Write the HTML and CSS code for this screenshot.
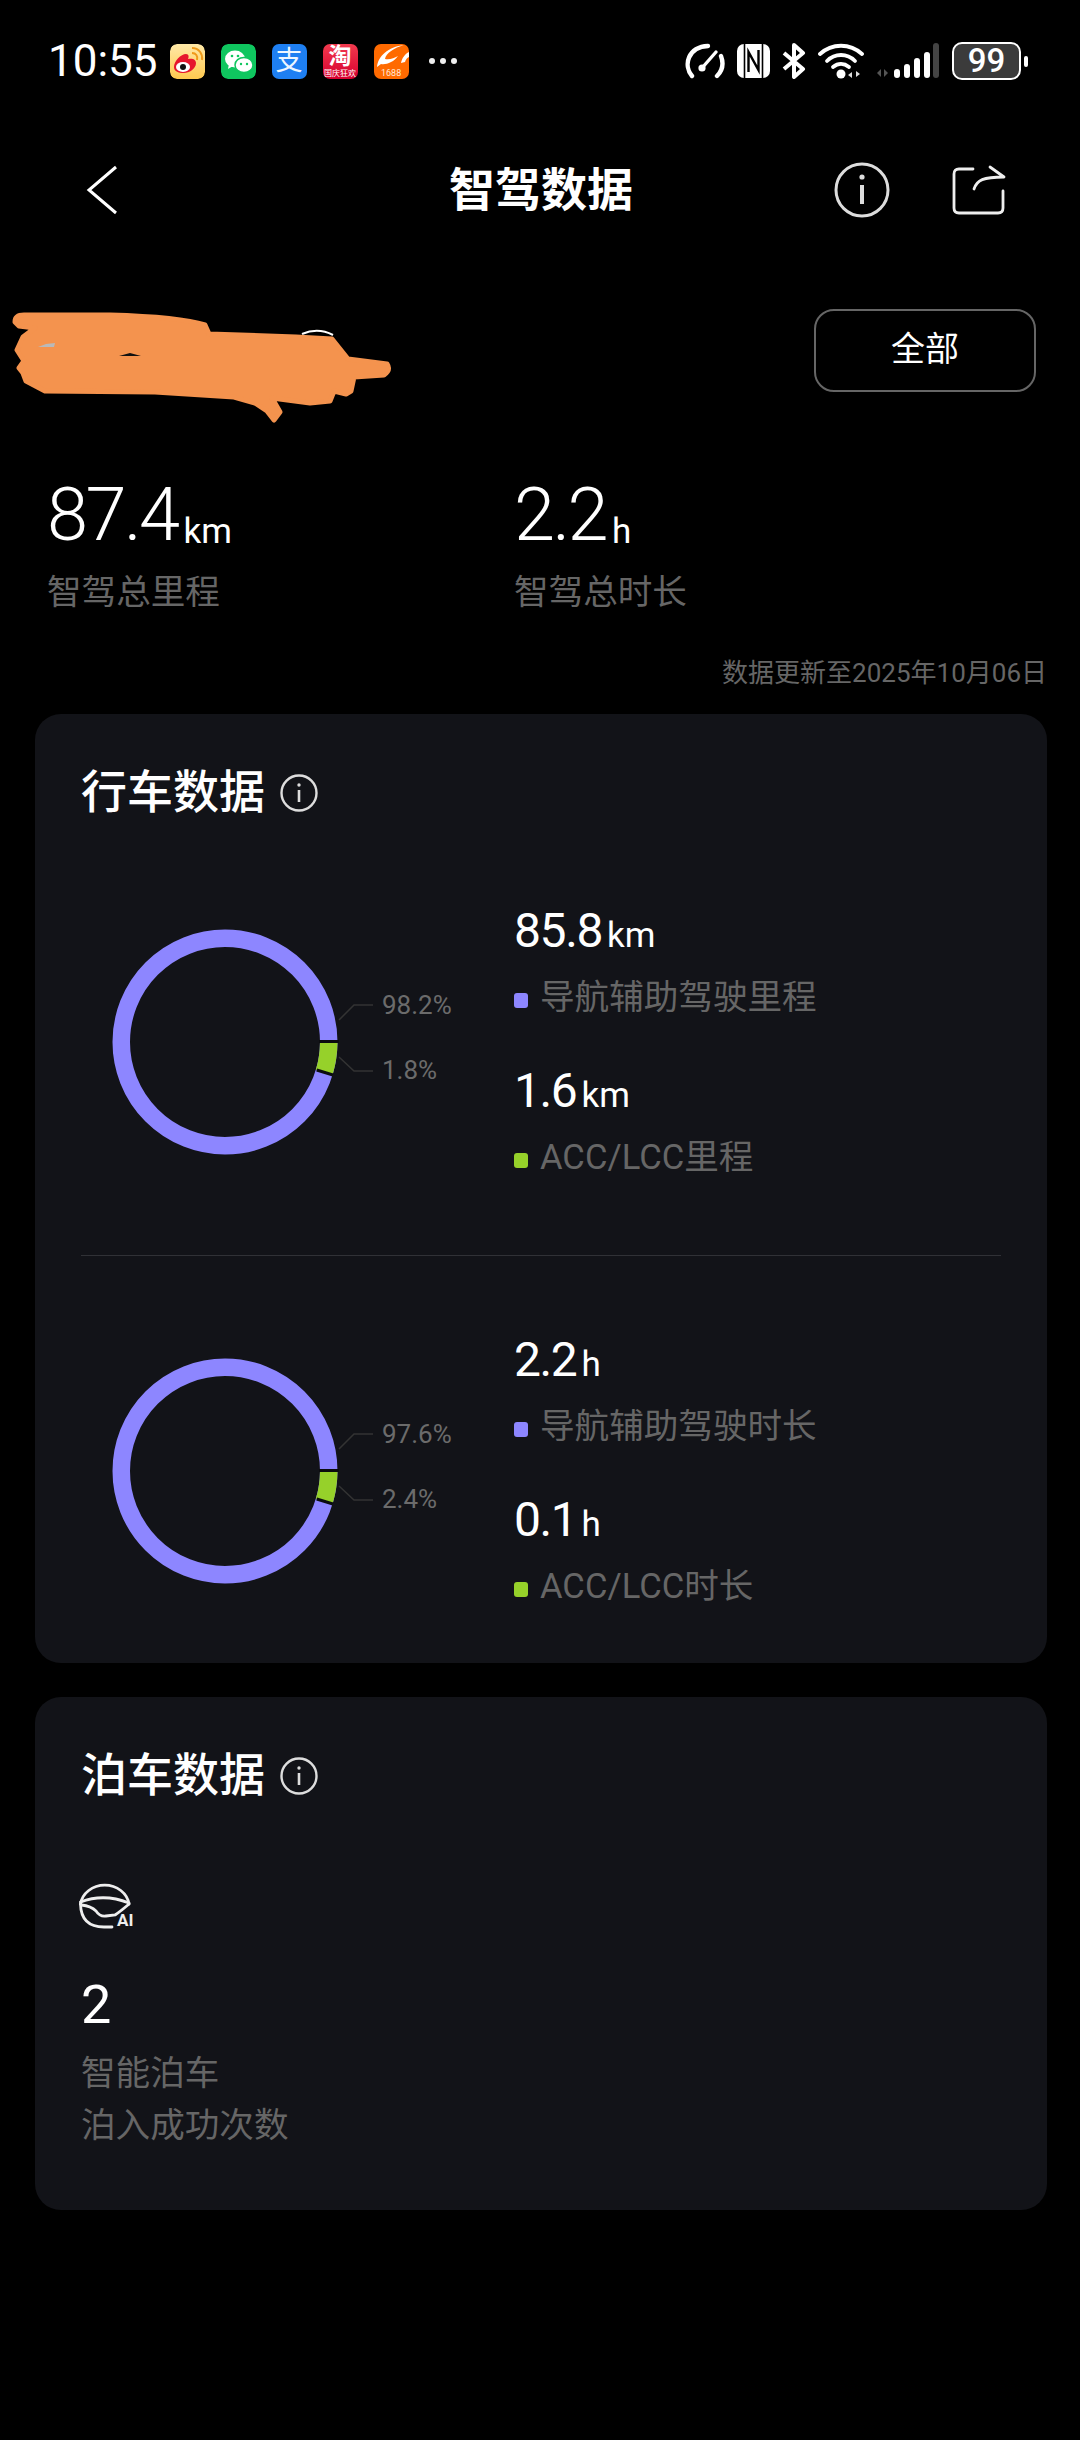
FILE: index.html
```html
<!DOCTYPE html>
<html lang="zh">
<head>
    <meta charset="utf-8">
    <meta name="viewport" content="width=device-width, initial-scale=1">
    <title>智驾数据</title>
    <link rel="stylesheet" href="styles.css">
</head>
<body>
    <div class="status-bar">
        <span class="clock">10:55</span>
        <div class="app-icons">
            <svg class="app" viewBox="0 0 35 35">
                <defs><linearGradient id="wb" x1="0" y1="0" x2="0" y2="1"><stop offset="0" stop-color="#ffe9a8"/><stop offset="1" stop-color="#ffc94f"/></linearGradient></defs>
                <rect width="35" height="35" rx="7" fill="url(#wb)"/>
                <path d="M4 23c0-6 7-13 12-13 3 0 3 3 2 5 4-1 8 0 8 4 0 6-7 10-12 10-6 0-10-2-10-6z" fill="#e6162d"/>
                <ellipse cx="13" cy="23" rx="7" ry="5" fill="#fff"/>
                <circle cx="13" cy="23" r="3" fill="#111"/>
                <path d="M22 9c4 0 6 3 5 7M22 4c7 0 11 6 10 12" fill="none" stroke="#f09a1a" stroke-width="2"/>
            </svg>
            <svg class="app" viewBox="0 0 35 35">
                <rect width="35" height="35" rx="7" fill="#0fc65f"/>
                <ellipse cx="14" cy="15" rx="10" ry="8.5" fill="#fff"/>
                <path d="M8 20l-1 5 5-3z" fill="#fff"/>
                <ellipse cx="23" cy="21" rx="9" ry="7.5" fill="#fff" stroke="#0fc65f" stroke-width="1.5"/>
                <circle cx="11" cy="12" r="1.3" fill="#0fc65f"/><circle cx="17" cy="12" r="1.3" fill="#0fc65f"/>
                <circle cx="20" cy="20" r="1.2" fill="#0fc65f"/><circle cx="26" cy="20" r="1.2" fill="#0fc65f"/>
            </svg>
            <div class="app alipay">支</div>
            <div class="app taobao"><span class="tb-main">淘</span><span class="tb-sub">国庆狂欢</span></div>
            <div class="app ali1688">
                <svg class="swirl" viewBox="0 0 35 24"><path d="M3 23C4 12 14 3 30 1 20 4 12 9 11 15c5 1 9-1 13-3-4 6-12 9-17 8zM27 19c1-5 4-9 8-11v5c-2 1-3 2-4 5z" fill="#fff"/></svg>
                <span class="ali-num">1688</span>
            </div>
            <div class="more"><i></i><i></i><i></i></div>
        </div>
        <div class="sys-icons">
            <svg class="ic-speed" viewBox="0 0 41 36" fill="none" stroke="#fff" stroke-width="4.4" stroke-linecap="round">
                <path d="M8 33C-1 22 4 4 24 3"/><path d="M37 13c3 8 1 15-4 20"/>
                <path d="M18 25L32 9" stroke-width="3.4"/><circle cx="18" cy="25" r="3.6" fill="#fff" stroke="none"/>
            </svg>
            <svg class="ic-nfc" viewBox="0 0 33 34">
                <rect width="33" height="34" rx="7" fill="#fff"/>
                <path d="M7.5 0V34M25.5 0V34" stroke="#000" stroke-width="1.6"/>
                <path d="M11.5 28V8L21.5 26V6" fill="none" stroke="#000" stroke-width="2.4"/>
            </svg>
            <svg class="ic-bt" viewBox="0 0 24 36" fill="none" stroke="#fff" stroke-width="4" stroke-linejoin="round">
                <path d="M2 10L21 26L12 34V2L21 10L2 26"/>
            </svg>
            <svg class="ic-wifi" viewBox="0 0 46 36" fill="none" stroke="#fff" stroke-width="3.8" stroke-linecap="round">
                <path d="M2 11C14 0 32 0 44 11"/><path d="M9 18C17 10 29 10 37 18"/><path d="M15 24C20 20 26 20 31 24"/>
                <circle cx="23" cy="31" r="4.5" fill="#fff" stroke="none"/>
                <path d="M34 29l-4 3 4 3zM38 28l4 3-4 3z" fill="#ddd" stroke="none"/>
            </svg>
            <svg class="ic-signal" viewBox="0 0 64 36">
                <path d="M5 26l-4 4 4 4zM8 26l4 4-4 4z" fill="#555"/>
                <rect x="18" y="26" width="6" height="9" rx="3" fill="#fff"/>
                <rect x="28" y="21" width="6" height="14" rx="3" fill="#fff"/>
                <rect x="38" y="15" width="6" height="20" rx="3" fill="#fff"/>
                <rect x="48" y="9" width="6" height="26" rx="3" fill="#fff"/>
                <rect x="57" y="0" width="6" height="35" rx="3" fill="#444"/>
            </svg>
            <div class="battery"><span class="battery-body">99</span><i class="battery-nub"></i></div>
        </div>
    </div>

    <div class="nav-bar">
        <svg class="ic-back" viewBox="0 0 32 50" fill="none" stroke="#fff" stroke-width="3">
            <path d="M30 2L3 25L30 48"/>
        </svg>
        <h1 class="nav-title">智驾数据</h1>
        <svg class="ic-info-lg" viewBox="0 0 56 56" fill="none" stroke="#ddd" stroke-width="3">
            <circle cx="28" cy="28" r="26"/>
            <path d="M28 23V42" stroke-width="4"/>
            <circle cx="28" cy="15" r="2.6" fill="#ddd" stroke="none"/>
        </svg>
        <svg class="ic-share" viewBox="0 0 54 50" fill="none" stroke="#eee" stroke-width="2.8" stroke-linecap="round" stroke-linejoin="round">
            <path d="M21 4H7Q2 4 2 9V43Q2 48 7 48H46Q51 48 51 43V26"/>
            <path d="M22 24C25 15 31 12 52 12L38 2"/>
        </svg>
    </div>

    <div class="filter-row">
        <svg class="scribble" viewBox="0 0 400 120">
            <path d="M302 31Q318 24 333 32" fill="none" stroke="#fff" stroke-width="2"/>
            <path d="M15 19Q15 12 24 12L110 12Q180 14 205 22L209 31L296 34L332 36L348 56L387 61Q391 67 384 72L354 74L351 88L346 91L334 88L330 98L310 100L272 95L280 109L274 117L267 108L255 100L234 94L155 89L45 88L26 78L23 70L19 65L24 58L17 47L23 34L35 25L19 23Z" fill="#f4934e" stroke="#f4934e" stroke-width="5" stroke-linejoin="round"/>
            <path d="M38 44L46 41L55 40L54 44Z" fill="#b9b9b9"/>
            <path d="M119 53L130 50L141 53Z" fill="#111"/>
        </svg>
        <div class="filter-btn">全部</div>
    </div>

    <div class="summary">
        <div class="summary-item">
            <div class="big-value">87.4<span class="big-unit">km</span></div>
            <div class="muted">智驾总里程</div>
        </div>
        <div class="summary-item">
            <div class="big-value">2.2<span class="big-unit">h</span></div>
            <div class="muted">智驾总时长</div>
        </div>
    </div>

    <div class="updated">数据更新至2025年10月06日</div>

    <div class="card">
        <div class="card-title">行车数据
            <svg class="ic-info" viewBox="0 0 38 38" fill="none" stroke="#ddd" stroke-width="2.4">
                <circle cx="19" cy="19" r="17.5"/>
                <path d="M19 16V28" stroke-width="2.6"/>
                <circle cx="19" cy="11" r="1.7" fill="#ddd" stroke="none"/>
            </svg>
        </div>

        <div class="chart-row first">
            <svg class="donut" viewBox="0 0 433 260">
                <circle cx="144" cy="131" r="103.75" fill="none" stroke="#8d86ff" stroke-width="17.5"/>
                <path d="M247.75 131A103.75 103.75 0 0 1 243.2 161.3" fill="none" stroke="#96d12a" stroke-width="17.5"/>
                <path d="M238 130.5H258M235.7 159L252 164" stroke="#0b0c0f" stroke-width="3"/>
                <path d="M258 109L273 94H292M258 146L273 160H292" fill="none" stroke="#333" stroke-width="1.5"/>
                <text x="301" y="103" class="pct">98.2%</text>
                <text x="301" y="168" class="pct">1.8%</text>
            </svg>
            <div class="stats">
                <div class="stat-value">85.8<span class="stat-unit">km</span></div>
                <div class="stat-label"><i class="dot purple"></i>导航辅助驾驶里程</div>
                <div class="stat-value second">1.6<span class="stat-unit">km</span></div>
                <div class="stat-label"><i class="dot green"></i>ACC/LCC里程</div>
            </div>
        </div>

        <div class="divider"></div>

        <div class="chart-row">
            <svg class="donut" viewBox="0 0 433 260">
                <circle cx="144" cy="131" r="103.75" fill="none" stroke="#8d86ff" stroke-width="17.5"/>
                <path d="M247.75 131A103.75 103.75 0 0 1 243.2 161.3" fill="none" stroke="#96d12a" stroke-width="17.5"/>
                <path d="M238 130.5H258M235.7 159L252 164" stroke="#0b0c0f" stroke-width="3"/>
                <path d="M258 109L273 94H292M258 146L273 160H292" fill="none" stroke="#333" stroke-width="1.5"/>
                <text x="301" y="103" class="pct">97.6%</text>
                <text x="301" y="168" class="pct">2.4%</text>
            </svg>
            <div class="stats">
                <div class="stat-value">2.2<span class="stat-unit">h</span></div>
                <div class="stat-label"><i class="dot purple"></i>导航辅助驾驶时长</div>
                <div class="stat-value second">0.1<span class="stat-unit">h</span></div>
                <div class="stat-label"><i class="dot green"></i>ACC/LCC时长</div>
            </div>
        </div>
    </div>

    <div class="card parking">
        <div class="card-title">泊车数据
            <svg class="ic-info" viewBox="0 0 38 38" fill="none" stroke="#ddd" stroke-width="2.4">
                <circle cx="19" cy="19" r="17.5"/>
                <path d="M19 16V28" stroke-width="2.6"/>
                <circle cx="19" cy="11" r="1.7" fill="#ddd" stroke="none"/>
            </svg>
        </div>
        <div class="park-icon">
            <svg class="ic-park" viewBox="0 0 58 48" fill="none" stroke="#eee" stroke-width="2.8" stroke-linecap="round">
                <path d="M1.5 23A24.5 22 0 0 1 50 23"/>
                <path d="M1.5 21Q25 12 50 22"/>
                <path d="M2.5 24Q12 25 17 30Q21 36 27 35L36 34Q42 30 50 23"/>
                <path d="M1.5 23Q2 46 25 46L33 46"/>
            </svg>
            <span class="ai-badge">AI</span>
        </div>
        <div class="park-value">2</div>
        <div class="park-label">智能泊车</div>
        <div class="park-label">泊入成功次数</div>
    </div>
</body>
</html>
```

FILE: styles.css
```css
body {
    margin: 0;
    width: 1080px;
    height: 2440px;
    background-color: #000;
    color: white;
    font-family: Roboto, "Noto Sans CJK SC", sans-serif;
    overflow: hidden;
}

i {
    display: block;
}

/* status bar */
.status-bar {
    height: 122px;
    padding: 0 52px 0 48px;
    display: flex;
    align-items: center;
    justify-content: space-between;
}

.clock {
    font-size: 44px;
    line-height: 44px;
}

.app-icons {
    display: flex;
    align-items: center;
    gap: 16px;
    margin-right: auto;
    margin-left: 12px;
}

.app {
    width: 35px;
    height: 35px;
    border-radius: 7px;
    overflow: hidden;
    display: block;
}

.alipay {
    background-color: #1e7ff2;
    font-size: 27px;
    line-height: 35px;
    text-align: center;
    color: #eef6ff;
}

.taobao {
    background: linear-gradient(#f23a4e, #d6002f);
    text-align: center;
}

.tb-main {
    display: block;
    font-size: 23px;
    line-height: 25px;
    font-weight: bold;
}

.tb-sub {
    display: block;
    font-size: 8px;
    line-height: 9px;
    white-space: nowrap;
}

.ali1688 {
    background-color: #ff6a00;
    text-align: center;
}

.swirl {
    display: block;
    width: 35px;
    height: 24px;
}

.ali-num {
    display: block;
    font-size: 9px;
    line-height: 10px;
    color: #ffe9d6;
}

.more {
    display: flex;
    gap: 5px;
    margin-left: 4px;
}

.more i {
    width: 6px;
    height: 6px;
    border-radius: 50%;
    background-color: #eee;
}

.sys-icons {
    display: flex;
    align-items: center;
    gap: 12px;
}

.ic-speed { width: 41px; height: 36px; }
.ic-nfc { width: 33px; height: 34px; }
.ic-bt { width: 24px; height: 36px; }
.ic-wifi { width: 46px; height: 36px; }
.ic-signal { width: 64px; height: 36px; }

.battery {
    display: flex;
    align-items: center;
    gap: 3px;
}

.battery-body {
    width: 65px;
    height: 34px;
    border: 2.5px solid #fff;
    border-radius: 10px;
    background-color: #3b3b3b;
    font-size: 33px;
    font-weight: 500;
    line-height: 34px;
    text-align: center;
}

.battery-nub {
    width: 4px;
    height: 11px;
    border-radius: 2px;
    background-color: #fff;
}

/* title bar */
.nav-bar {
    height: 136px;
    padding: 0 74px 0 86px;
    display: flex;
    align-items: center;
}

.ic-back {
    width: 32px;
    height: 50px;
}

.nav-title {
    margin: 0 0 0 331px;
    font-size: 46px;
    line-height: 60px;
    font-weight: 700;
}

.ic-info-lg {
    width: 56px;
    height: 56px;
    margin-left: auto;
}

.ic-share {
    width: 54px;
    height: 50px;
    margin-left: 62px;
}

/* filter */
.filter-row {
    position: relative;
    height: 83px;
    margin-top: 51px;
    padding-right: 44px;
    display: flex;
    justify-content: flex-end;
}

.scribble {
    position: absolute;
    left: 0;
    top: -6px;
    width: 400px;
    height: 120px;
}

.filter-btn {
    width: 218px;
    height: 79px;
    border: 2px solid #666;
    border-radius: 20px;
    font-size: 34px;
    line-height: 76px;
    text-align: center;
}

/* totals */
.summary {
    margin-top: 83px;
    padding-left: 47px;
    display: flex;
}

.summary-item {
    width: 467px;
}

.big-value {
    font-size: 74px;
    font-weight: 300;
    line-height: 80px;
    letter-spacing: -2.6px;
    white-space: nowrap;
}

.big-unit {
    margin-left: 6px;
    font-size: 35px;
    font-weight: 400;
    line-height: 1;
    letter-spacing: 0;
    vertical-align: -3px;
}

.muted {
    margin-top: 15px;
    font-size: 34.6px;
    line-height: 44px;
    color: #666;
}

.updated {
    margin-top: 41px;
    padding-right: 33px;
    font-size: 26px;
    line-height: 36px;
    text-align: right;
    color: #666;
}

/* cards */
.card {
    margin: 23px 33px 0 35px;
    padding: 48px 46px 55px;
    background-color: #121318;
    border-radius: 26px;
}

.parking {
    margin-top: 34px;
    padding-bottom: 59px;
}

.card-title {
    display: flex;
    align-items: center;
    gap: 15px;
    font-size: 46px;
    line-height: 60px;
    font-weight: 500;
}

.ic-info {
    width: 38px;
    height: 38px;
    margin-top: 2px;
}

.chart-row {
    display: flex;
    align-items: center;
}

.chart-row.first {
    margin-top: 81px;
}

.donut {
    width: 433px;
    height: 260px;
    flex-shrink: 0;
}

.pct {
    font-size: 26px;
    fill: #6b6b6b;
}

.stat-value {
    font-size: 48px;
    line-height: 56px;
    letter-spacing: -1.4px;
    white-space: nowrap;
}

.stat-value.second {
    margin-top: 44px;
}

.stat-unit {
    margin-left: 5px;
    font-size: 35px;
    line-height: 1;
    letter-spacing: 0;
}

.stat-label {
    margin-top: 16px;
    display: flex;
    align-items: center;
    gap: 12px;
    font-size: 34.6px;
    line-height: 44px;
    color: #666;
}

.dot {
    width: 14px;
    height: 15px;
    border-radius: 3px;
    margin-top: 6px;
}

.dot.purple { background-color: #8d86ff; }
.dot.green { background-color: #96d12a; }

.divider {
    height: 1px;
    margin: 76px 0;
    background-color: #303136;
}

/* parking */
.park-icon {
    position: relative;
    width: 58px;
    height: 48px;
    margin-top: 76px;
    margin-left: -2px;
}

.ic-park {
    display: block;
    width: 58px;
    height: 48px;
}

.ai-badge {
    position: absolute;
    left: 38px;
    bottom: 0;
    font-size: 17px;
    font-weight: 700;
    line-height: 17px;
    color: #eee;
}

.park-value {
    margin-top: 46px;
    font-size: 54px;
    line-height: 60px;
}

.park-label {
    font-size: 34.6px;
    line-height: 52px;
    color: #666;
}

.park-value + .park-label {
    margin-top: 12px;
}
```
